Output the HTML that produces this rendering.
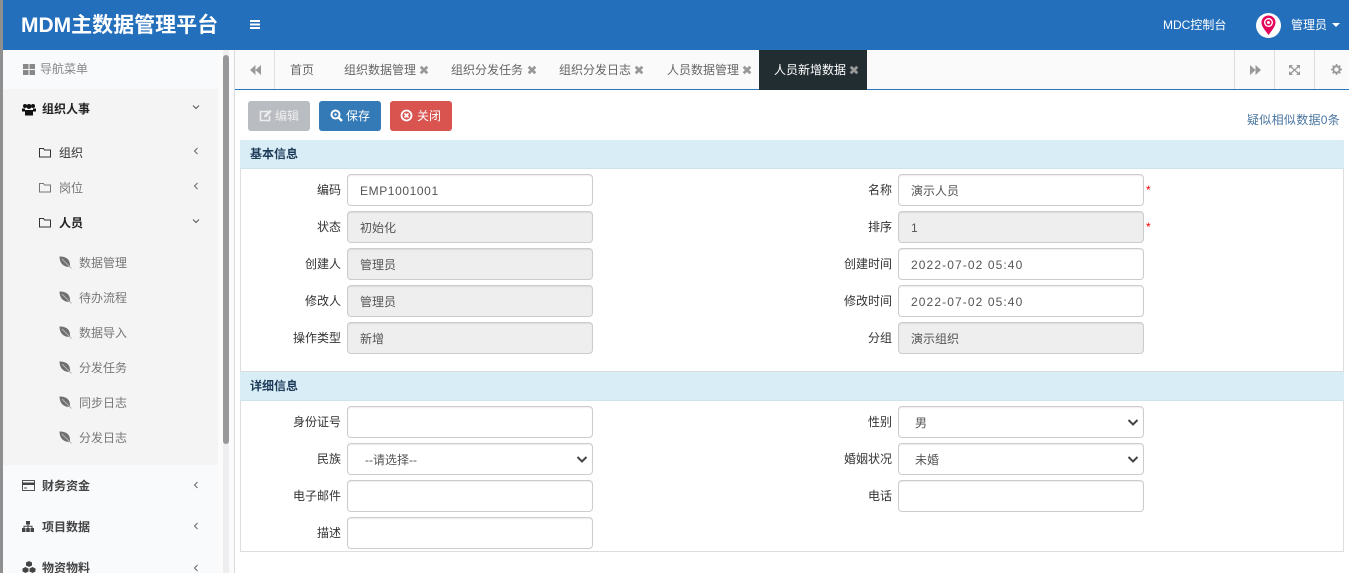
<!DOCTYPE html>
<html lang="zh"><head><meta charset="utf-8"><title>MDM</title>
<style>
*{box-sizing:border-box}
html,body{margin:0;padding:0;width:1349px;height:573px;overflow:hidden;background:#fff}
body{font:12px "Liberation Sans","Noto Sans CJK SC",sans-serif;color:#333;position:relative}
.a{position:absolute;white-space:nowrap;line-height:16px}
svg{position:absolute;display:block}
.b{font-weight:700}
.f{position:absolute;width:246px;height:32px;border:1px solid #ccc;border-radius:4px;background:#fff;color:#555;line-height:32px;padding-left:12px;font-size:12px;box-shadow:inset 0 1px 1px rgba(0,0,0,.075)}
.d{background:#eee}
.l{position:absolute;width:90px;text-align:right;line-height:16px;color:#333}
.sec{position:absolute;left:240px;width:1104px;height:29px;background:#d9edf7;border-bottom:1px solid #cfe3ee;color:#1d3b58;font-weight:700;line-height:29px;padding-left:10px;border-radius:3px 3px 0 0}
.tab{position:absolute;top:62px;line-height:16px;color:#666;white-space:nowrap}
.x{position:absolute;top:65px;width:10px;height:10px}
.btn{position:absolute;top:101px;width:62px;height:30px;border-radius:3px;color:#fff;line-height:30px;padding-left:27px}
.star{position:absolute;left:1146px;color:#e00;font-size:12px;line-height:12px}
.sub{color:#777}
.ch{position:absolute;left:192px;width:8px;height:8px}
.arrow{position:absolute;right:3px;top:8px;width:14px;height:14px}
.date{letter-spacing:1.1px}
</style></head><body>
<svg width="0" height="0" style="position:absolute"><defs>
<symbol id="x" viewBox="0 0 10 10"><path d="M1.700 1.700L8.300 8.300M8.300 1.700L1.700 8.300" stroke="#999" stroke-width="2.800" fill="none"/></symbol>
<symbol id="left" viewBox="0 0 8 8"><path d="M5.500 1L2.500 4L5.500 7" stroke="#666" fill="none"/></symbol>
<symbol id="down" viewBox="0 0 8 8"><path d="M1 2.500L4 5.500L7 2.500" stroke="#555" fill="none"/></symbol>
<symbol id="folder" viewBox="0 0 12 11"><path d="M.5 1.500h4l1 1.500H11.500V10H.5z" stroke="#333" fill="none"/></symbol>
<symbol id="leaf" viewBox="0 0 13 13"><path d="M.5 .5C7 .5 11.500 3 11 10.800C5 11.500 .5 7.500 .5 .5z" fill="#6f6f6f"/><path d="M3 3L12.500 12.500" stroke="#b5b5b5" stroke-width="1"/></symbol>
<symbol id="sel" viewBox="0 0 14 14"><path d="M2.500 5L7 9.500L11.500 5" stroke="#444" stroke-width="2" fill="none"/></symbol>
</defs></svg>

<div class="a" style="left:0;top:0;width:3px;height:573px;background:#8f8f8f"></div>
<div class="a" style="left:3px;top:0;width:1346px;height:50px;background:#236fbb"></div>
<div class="a" style="left:21px;top:13px;color:#fff;font-size:21px;font-weight:700;line-height:26px">MDM主数据管理平台</div>
<div class="a" style="left:250px;top:20px;width:10px;height:2px;background:#fff;box-shadow:0 3.500px 0 #fff,0 7px 0 #fff"></div>
<div class="a" style="left:1163px;top:17px;color:#fff">MDC控制台</div>
<div class="a" style="left:1256px;top:13px;width:25px;height:25px;border-radius:50%;background:#fff"></div>
<svg style="left:1261px;top:15px" width="15" height="20" viewBox="0 0 15 20"><path d="M7.500 20C3 14 .5 11 .5 7.500a7 7 0 0 1 14 0C14.500 11 12 14 7.500 20z" fill="#e4065b"/><circle cx="7.500" cy="7.500" r="3.800" fill="none" stroke="#fff" stroke-width="1.400"/><circle cx="7.500" cy="7.500" r="1.500" fill="#fff"/></svg>
<div class="a" style="left:1291px;top:17px;color:#fff">管理员</div>
<div class="a" style="left:1332px;top:23px;width:0;height:0;border:4px solid transparent;border-top-color:#fff;border-bottom:0"></div>

<!-- sidebar -->
<div class="a" style="left:3px;top:50px;width:215px;height:523px;background:#f9fafc"></div>
<div class="a" style="left:3px;top:89px;width:215px;height:376px;background:#f4f4f5"></div>
<div class="a" style="left:218px;top:50px;width:16px;height:523px;background:#fbfbfc"></div>
<div class="a" style="left:223px;top:50px;width:6px;height:523px;background:#eeeef0"></div>
<div class="a" style="left:223px;top:55px;width:6px;height:389px;background:#98989a;border-radius:3px"></div>
<div class="a" style="left:234px;top:50px;width:1px;height:523px;background:#d8dce0"></div>

<svg style="left:23px;top:64px" width="12" height="11" viewBox="0 0 12 11"><path d="M0 0h5.500v5H0zM6.500 0H12v5H6.500zM0 6h5.500v5H0zM6.500 6H12v5H6.500z" fill="#888"/></svg>
<div class="a" style="left:40px;top:61px;color:#888">导航菜单</div>

<svg style="left:22px;top:103px" width="14" height="13" viewBox="0 0 14 13"><circle cx="3" cy="3" r="2" fill="#111"/><circle cx="11" cy="3" r="2" fill="#111"/><circle cx="7" cy="3.500" r="2.500" fill="#111"/><path d="M0 5.500h3v3H0zM11 5.500h3v3h-3zM3 7h8v5.500H3z" fill="#111"/></svg>
<div class="a b" style="left:42px;top:101px;color:#222">组织人事</div>
<svg class="ch" style="top:103px"><use href="#down"/></svg>

<svg style="left:39px;top:147px" width="12" height="11"><use href="#folder"/></svg>
<div class="a" style="left:59px;top:145px;color:#333">组织</div>
<svg class="ch" style="top:147px"><use href="#left"/></svg>
<svg style="left:39px;top:182px;opacity:.65" width="12" height="11"><use href="#folder"/></svg>
<div class="a" style="left:59px;top:180px;color:#777">岗位</div>
<svg class="ch" style="top:182px"><use href="#left"/></svg>
<svg style="left:39px;top:217px" width="12" height="11"><use href="#folder"/></svg>
<div class="a b" style="left:59px;top:215px;color:#222">人员</div>
<svg class="ch" style="top:217px"><use href="#down"/></svg>

<svg style="left:59px;top:256px" width="13" height="13"><use href="#leaf"/></svg><div class="a sub" style="left:79px;top:255px">数据管理</div>
<svg style="left:59px;top:291px" width="13" height="13"><use href="#leaf"/></svg><div class="a sub" style="left:79px;top:290px">待办流程</div>
<svg style="left:59px;top:326px" width="13" height="13"><use href="#leaf"/></svg><div class="a sub" style="left:79px;top:325px">数据导入</div>
<svg style="left:59px;top:361px" width="13" height="13"><use href="#leaf"/></svg><div class="a sub" style="left:79px;top:360px">分发任务</div>
<svg style="left:59px;top:396px" width="13" height="13"><use href="#leaf"/></svg><div class="a sub" style="left:79px;top:395px">同步日志</div>
<svg style="left:59px;top:431px" width="13" height="13"><use href="#leaf"/></svg><div class="a sub" style="left:79px;top:430px">分发日志</div>

<svg style="left:22px;top:480px" width="13" height="11" viewBox="0 0 13 11"><path d="M.5.500h12v10H.5z" fill="none" stroke="#555"/><path d="M0 2.500h13v2.500H0z" fill="#444"/><path d="M2 8h3" stroke="#555"/></svg>
<div class="a b" style="left:42px;top:478px;color:#444">财务资金</div>
<svg class="ch" style="top:481px"><use href="#left"/></svg>
<svg style="left:22px;top:521px" width="12" height="11" viewBox="0 0 12 11"><path d="M4 0h4v3.500H4zM0 7h3.500v4H0zM4.200 7h3.600v4H4.200zM8.500 7H12v4H8.500z" fill="#444"/><path d="M6 3.500V7M2 7V5.300h8V7" stroke="#444" fill="none"/></svg>
<div class="a b" style="left:42px;top:519px;color:#444">项目数据</div>
<svg class="ch" style="top:522px"><use href="#left"/></svg>
<svg style="left:22px;top:561px" width="14" height="12" viewBox="0 0 14 12"><path d="M7 0l3 1.500v3L7 6 4 4.500v-3zM3.500 6l3 1.500v3L3.500 12 .5 10.500v-3zM10.500 6l3 1.500v3L10.500 12l-3-1.500v-3z" fill="#444"/></svg>
<div class="a b" style="left:42px;top:560px;color:#444">物资物料</div>
<svg class="ch" style="top:564px"><use href="#left"/></svg>

<!-- tabs -->
<div class="a" style="left:235px;top:50px;width:1114px;height:39px;background:#fafafa"></div>
<div class="a" style="left:235px;top:89px;width:1114px;height:1px;background:#2a76b8"></div>
<div class="a" style="left:274px;top:50px;width:1px;height:39px;background:#e0e0e0"></div>
<div class="a" style="left:1234px;top:50px;width:1px;height:39px;background:#ddd"></div>
<div class="a" style="left:1274px;top:50px;width:1px;height:39px;background:#ddd"></div>
<div class="a" style="left:1314px;top:50px;width:1px;height:39px;background:#ddd"></div>
<svg style="left:250px;top:65px" width="11" height="10" viewBox="0 0 11 10"><path d="M5.500 0v10L0 5zM11 0v10L5.500 5z" fill="#999"/></svg>
<svg style="left:1250px;top:65px" width="11" height="10" viewBox="0 0 11 10"><path d="M0 0v10l5.500-5zM5.500 0v10L11 5z" fill="#999"/></svg>
<svg style="left:1289px;top:65px" width="11" height="10" viewBox="0 0 11 10"><path d="M0 0h4L0 4zM11 0H7l4 4zM0 10h4L0 6zM11 10H7l4-4z" fill="#999"/><path d="M1.500 1.500l8 7M9.500 1.500l-8 7" stroke="#999" stroke-width="1.300"/></svg>
<svg style="left:1331px;top:64px" width="11" height="11" viewBox="0 0 11 11"><circle cx="5.500" cy="5.500" r="3.200" fill="none" stroke="#999" stroke-width="2"/><path d="M5.500 0v2M5.500 9v2M0 5.500h2M9 5.500h2M1.600 1.600L3 3M8 8l1.400 1.400M9.400 1.600L8 3M3 8L1.600 9.400" stroke="#999" stroke-width="1.500"/></svg>

<div class="tab" style="left:290px">首页</div>
<div class="tab" style="left:344px">组织数据管理</div><svg class="x" style="left:419px"><use href="#x"/></svg>
<div class="tab" style="left:451px">组织分发任务</div><svg class="x" style="left:527px"><use href="#x"/></svg>
<div class="tab" style="left:559px">组织分发日志</div><svg class="x" style="left:634px"><use href="#x"/></svg>
<div class="tab" style="left:667px">人员数据管理</div><svg class="x" style="left:742px"><use href="#x"/></svg>
<div class="a" style="left:759px;top:50px;width:108px;height:40px;background:#222d32"></div>
<div class="tab" style="left:774px;color:#fff">人员新增数据</div><svg class="x" style="left:849px"><use href="#x"/></svg>

<!-- buttons -->
<div class="btn" style="left:248px;background:#b9bcc1;color:#eee">编辑</div>
<svg style="left:259px;top:109px" width="13" height="13" viewBox="0 0 13 13"><path d="M9 2.500H1.500V11.500H10.500V7" fill="none" stroke="#eee" stroke-width="1.600"/><path d="M5 8.500L5.500 6L11 .8l1.700 1.700L7.300 8z" fill="#eee"/></svg>
<div class="btn" style="left:319px;background:#337ab7">保存</div>
<svg style="left:330px;top:109px" width="13" height="13" viewBox="0 0 13 13"><circle cx="5.500" cy="5.500" r="4" fill="none" stroke="#fff" stroke-width="2"/><circle cx="5.500" cy="5.500" r="1.200" fill="#fff"/><path d="M8.500 8.500L12 12" stroke="#fff" stroke-width="2.300"/></svg>
<div class="btn" style="left:390px;background:#d9534f">关闭</div>
<svg style="left:400px;top:109px" width="13" height="13" viewBox="0 0 13 13"><circle cx="6.500" cy="6.500" r="5" fill="none" stroke="#fff" stroke-width="1.800"/><path d="M4.500 4.500l4 4M8.500 4.500l-4 4" stroke="#fff" stroke-width="1.600"/></svg>
<div class="a" style="left:1247px;top:112px;color:#4a76a0;letter-spacing:.3px">疑似相似数据0条</div>

<!-- sections -->
<div class="a" style="left:240px;top:140px;width:1104px;height:412px;border:1px solid #ddd;border-top:0"></div>
<div class="a" style="left:240px;top:371px;width:1104px;height:1px;background:#ddd"></div>
<div class="sec" style="top:140px">基本信息</div>
<div class="sec" style="top:372px;border-radius:0">详细信息</div>

<div class="l" style="left:251px;top:182px">编码</div><div class="f" style="left:347px;top:174px;letter-spacing:.6px">EMP1001001</div>
<div class="l" style="left:251px;top:219px">状态</div><div class="f d" style="left:347px;top:211px">初始化</div>
<div class="l" style="left:251px;top:256px">创建人</div><div class="f d" style="left:347px;top:248px">管理员</div>
<div class="l" style="left:251px;top:293px">修改人</div><div class="f d" style="left:347px;top:285px">管理员</div>
<div class="l" style="left:251px;top:330px">操作类型</div><div class="f d" style="left:347px;top:322px">新增</div>

<div class="l" style="left:802px;top:182px">名称</div><div class="f" style="left:898px;top:174px">演示人员</div>
<div class="l" style="left:802px;top:219px">排序</div><div class="f d" style="left:898px;top:211px">1</div>
<div class="l" style="left:802px;top:256px">创建时间</div><div class="f date" style="left:898px;top:248px">2022-07-02 05:40</div>
<div class="l" style="left:802px;top:293px">修改时间</div><div class="f date" style="left:898px;top:285px">2022-07-02 05:40</div>
<div class="l" style="left:802px;top:330px">分组</div><div class="f d" style="left:898px;top:322px">演示组织</div>
<div class="star" style="top:184px">*</div>
<div class="star" style="top:221px">*</div>

<div class="l" style="left:251px;top:414px">身份证号</div><div class="f" style="left:347px;top:406px"></div>
<div class="l" style="left:251px;top:451px">民族</div><div class="f" style="left:347px;top:443px;padding-left:17px">--请选择--<svg class="arrow"><use href="#sel"/></svg></div>
<div class="l" style="left:251px;top:488px">电子邮件</div><div class="f" style="left:347px;top:480px"></div>
<div class="l" style="left:251px;top:525px">描述</div><div class="f" style="left:347px;top:517px"></div>

<div class="l" style="left:802px;top:414px">性别</div><div class="f" style="left:898px;top:406px;padding-left:16px">男<svg class="arrow"><use href="#sel"/></svg></div>
<div class="l" style="left:802px;top:451px">婚姻状况</div><div class="f" style="left:898px;top:443px;padding-left:16px">未婚<svg class="arrow"><use href="#sel"/></svg></div>
<div class="l" style="left:802px;top:488px">电话</div><div class="f" style="left:898px;top:480px"></div>
</body></html>
